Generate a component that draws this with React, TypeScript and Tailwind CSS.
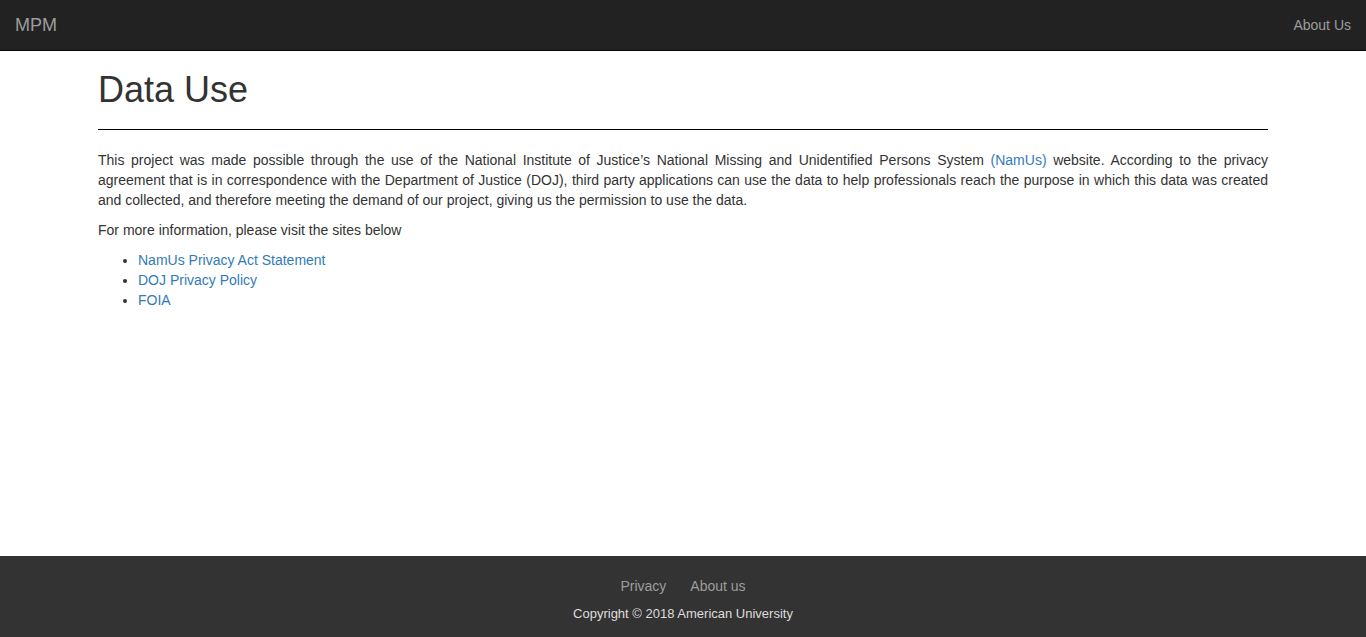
import React from "react";

export default function App() {
  const font = { fontFamily: '"Liberation Sans", Arial, Helvetica, sans-serif' };
  return (
    <div
      className="min-h-screen flex flex-col bg-white text-[14px] leading-[20px] text-[#333]"
      style={font}
    >
      <nav className="h-[51px] bg-[#222] border-b border-[#080808] flex items-start justify-between">
        <a href="#" className="px-[15px] py-[15px] text-[18px] leading-[20px] text-[#9d9d9d]">
          MPM
        </a>
        <a href="#" className="px-[15px] py-[15px] text-[14px] leading-[20px] text-[#9d9d9d]">
          About Us
        </a>
      </nav>

      <main className="flex-1 w-[1170px] mx-auto pt-[19px]">
        <div className="pb-[9px] border-b border-black mb-[20px]">
          <h1 className="text-[36px] leading-[39.6px] font-normal text-[#333] mb-[10px]">
            Data Use
          </h1>
        </div>
        <p className="text-justify mb-[10px]">
          This project was made possible through the use of the National Institute of Justice’s
          National Missing and Unidentified Persons System{" "}
          <a href="#" className="text-[#337ab7]">
            (NamUs)
          </a>{" "}
          website. According to the privacy agreement that is in correspondence with the
          Department of Justice (DOJ), third party applications can use the data to help
          professionals reach the purpose in which this data was created and collected, and
          therefore meeting the demand of our project, giving us the permission to use the data.
        </p>
        <p className="mb-[10px]">For more information, please visit the sites below</p>
        <ul className="list-disc pl-[40px] mb-[10px]">
          <li>
            <a href="#" className="text-[#337ab7]">
              NamUs Privacy Act Statement
            </a>
          </li>
          <li>
            <a href="#" className="text-[#337ab7]">
              DOJ Privacy Policy
            </a>
          </li>
          <li>
            <a href="#" className="text-[#337ab7]">
              FOIA
            </a>
          </li>
        </ul>
      </main>

      <footer className="h-[81px] bg-[#333] pt-[20px] flex flex-col items-center">
        <div className="flex justify-center gap-[24px] h-[20px]">
          <a href="#" className="text-[#9d9d9d]">
            Privacy
          </a>
          <a href="#" className="text-[#9d9d9d]">
            About us
          </a>
        </div>
        <div className="mt-[8px] text-[13px] leading-[20px] text-[#ddd]">
          Copyright © 2018 American University
        </div>
      </footer>
    </div>
  );
}
